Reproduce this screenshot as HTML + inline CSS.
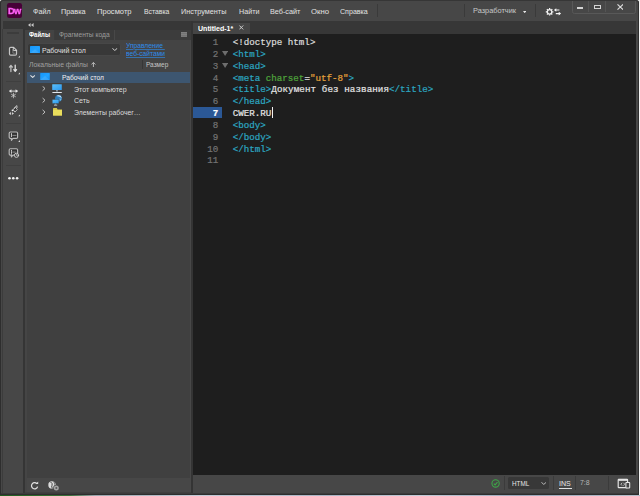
<!DOCTYPE html>
<html lang="ru">
<head>
<meta charset="utf-8">
<title>Dreamweaver - Untitled-1</title>
<style>
html,body{margin:0;padding:0;}
body{width:640px;height:496px;overflow:hidden;position:relative;background:#f4f4f4;font-family:"Liberation Sans",sans-serif;}
.abs,.t,#win div,#win svg{position:absolute;}
.t{white-space:pre;line-height:12px;height:12px;transform-origin:0 50%;}
#wall{left:0;top:495px;width:640px;height:1px;background:linear-gradient(90deg,#1f5a1f 0,#2e6b2c 40px,#3a6e3a 70px,#9aa5ad 95px,#c4ccd8 200px,#aab4c4 330px,#c4ccd8 420px,#9ca8bc 520px,#b8c0cc 640px);}
#win{left:0;top:0;width:639px;height:495px;background:#474747;border-radius:3px 3px 0 0;overflow:hidden;}
#frame{left:0;top:0;width:637px;height:493px;border:1px solid #2e2e2e;border-top-color:#363636;border-radius:3px 3px 0 0;z-index:50;pointer-events:none;}
#menubar{left:0;top:0;width:640px;height:21px;background:#474747;}
#strip{left:3px;top:21px;width:633px;height:13px;background:#373737;}
#tool{left:3px;top:29px;width:20px;height:464px;background:#474747;box-shadow:-0.8px 0 0 #3a3a3a;}
#gap1{left:23px;top:29px;width:2px;height:464px;background:#353535;}
#panel{left:25px;top:29.5px;width:166.2px;height:463px;background:#404040;}
#ptabs{left:0;top:0;width:166.2px;height:10.2px;background:#3c3c3c;}
#ptab1{left:0;top:0;width:29.2px;height:10.2px;background:#434343;}
#ptab2{left:29.5px;top:0;width:60px;height:10.2px;background:#3b3b3b;}
#pbot{left:0;top:448.5px;width:166.5px;height:13.5px;background:#474747;}
#gap2{left:191.2px;top:21px;width:2px;height:473px;background:#343434;}
#doc{left:193px;top:21px;width:445px;height:473px;}
#dtab{left:0;top:1.8px;width:56.6px;height:11px;background:#454545;}
#code{left:0;top:12.8px;width:443px;height:441px;background:#1e1e1e;}
#status{left:0;top:453.8px;width:445px;height:19.2px;background:#474747;}
.vsep{width:1px;background:#383838;}
.c{position:absolute;white-space:pre;font-family:"Liberation Mono",monospace;font-size:9.2px;line-height:12px;height:12px;-webkit-text-stroke:0.22px;}
</style>
</head>
<body>
<div id="wall" class="abs"></div>
<div id="win" class="abs">
  <div id="menubar"></div>
  <div id="strip"></div>
  <div id="tool"></div>
  <div id="gap1"></div>
  <div id="panel">
    <div id="ptabs"><div id="ptab1"></div><div id="ptab2"></div></div>
    <div id="pbot"></div>
  </div>
  <div id="gap2"></div>
  <div id="doc">
    <div id="dtab"></div>
    <div id="code"></div>
    <div id="status"></div>
  </div>
  <!-- Dw logo -->
<div id="logo" style="left:7.2px;top:3.2px;width:14.8px;height:15.2px;background:#470137;border-radius:2.2px;"></div>
<span class="t" id="logot" style="left:7.9px;top:5.0px;color:#ff61f6;font-size:9.3px;font-weight:700;letter-spacing:-0.6px;-webkit-text-stroke:0.35px #ff61f6;will-change:transform;">Dw</span>
<!-- collapse arrows -->
<svg style="left:27.8px;top:23.2px" width="6" height="4" viewBox="0 0 6 4"><path d="M2.6 0V4L0 2ZM5.6 0V4L3 2Z" fill="#c4c4c4"/></svg>
<!-- toolbar grip -->
<div style="left:7px;top:32px;width:12.4px;height:1.6px;background:#3c3c3c;"></div>
<!-- toolbar separators -->
<div style="left:6px;top:80.8px;width:15px;height:1px;background:#3f3f3f;"></div>
<div style="left:6px;top:122.8px;width:15px;height:1px;background:#3f3f3f;"></div>
<div style="left:6px;top:164.8px;width:15px;height:1px;background:#3f3f3f;"></div>
<!-- toolbar icons -->
<svg id="tbicons" style="left:3px;top:40px" width="20" height="150" viewBox="3 40 20 150" fill="none" stroke="#c4c4c4" stroke-width="1.1" stroke-linecap="round" stroke-linejoin="round">
  <!-- file -->
  <path d="M10.7 47.4H13.6L16.5 50.2V54Q16.5 55.2 15.3 55.2H10.7Q9.5 55.2 9.5 54V48.6Q9.5 47.4 10.7 47.4Z" fill="#363636" stroke-width="1.25"/>
  <path d="M13.3 47.8V50.6H16.2" stroke-width="0.9" stroke="#e0e0e0"/>
  <path d="M12.9 49.4V53.2H15.2" stroke-width="0.8" stroke="#8a8a8a"/>
  <path d="M20 55.7V57.5H18.2Z" fill="#d8d8d8" stroke="none"/>
  <!-- up/down arrows -->
  <path d="M10.9 71.6V66M9.4 67.1L10.9 65.3L12.4 67.1" stroke-width="1.25" stroke="#c0c0c0"/>
  <path d="M15.2 65V70.6M13.8 69.7L15.2 71.4L16.6 69.7" stroke-width="1.25" stroke="#e4e4e4"/>
  <path d="M20 72.4V74.2H18.2Z" fill="#d8d8d8" stroke="none"/>
  <!-- expand -->
  <path d="M10.6 91.1H16.4" stroke-width="1" stroke="#d0d0d0"/>
  <path d="M11 90L9.2 91.1L11 92.2ZM16 90L17.8 91.1L16 92.2Z" fill="#f0f0f0" stroke="#f0f0f0" stroke-width="0.5"/>
  <path d="M13.45 93.2V97.8M11.5 94.35L15.4 96.65M15.4 94.35L11.5 96.65" stroke-width="0.8" stroke="#cccccc"/>
  <!-- brush / code -->
  <path d="M11 112L8.9 113.45L11 114.9ZM11.9 112L14 113.45L11.9 114.9Z" fill="#cfcfcf" stroke="none"/>
  <path d="M13.4 109.4L15.6 107.4L17.3 109.4L15.2 111.8Z" stroke-width="1" stroke="#bdbdbd" fill="#333"/>
  <path d="M14 108.2L16.9 105.6L17 107.6" stroke-width="1" stroke="#c8c8c8"/>
  <circle cx="12.5" cy="110.3" r="0.9" fill="#efefef" stroke="none"/>
  <path d="M20 114.4V116.2H18.2Z" fill="#d8d8d8" stroke="none"/>
  <!-- comment 1 -->
  <path d="M10.4 132H16.4Q17.6 132 17.6 133.2V137.2Q17.6 138.4 16.4 138.4H12.9L11.4 140.3V138.4H10.4Q9.2 138.4 9.2 137.2V133.2Q9.2 132 10.4 132Z" stroke-width="1.15" fill="#333" stroke="#bababa"/>
  <path d="M11.45 133.6V137.4" stroke-width="0.9" stroke="#e4e4e4" stroke-dasharray="1.1 0.8"/>
  <path d="M12.8 135.4H16" stroke-width="0.9" stroke="#9a9a9a"/>
  <path d="M20 140.1V141.9H18.2Z" fill="#d8d8d8" stroke="none"/>
  <!-- comment 2 -->
  <path d="M10.4 148.7H16.4Q17.6 148.7 17.6 149.9V153.9Q17.6 155.1 16.4 155.1H12.9L11.4 157V155.1H10.4Q9.2 155.1 9.2 153.9V149.9Q9.2 148.7 10.4 148.7Z" stroke-width="1.15" fill="#333" stroke="#bababa"/>
  <path d="M11.45 150.3V154.1" stroke-width="0.9" stroke="#e4e4e4" stroke-dasharray="1.1 0.8"/>
  <path d="M12.8 152.1H15.4" stroke-width="0.9" stroke="#9a9a9a"/>
  <circle cx="16.5" cy="155.3" r="2.1" stroke-width="0.9" fill="#444" stroke="#d4d4d4"/>
  <path d="M16.5 154.2V155.4H17.4" stroke-width="0.6" stroke="#d4d4d4"/>
  <!-- dots -->
  <circle cx="9.5" cy="178.3" r="1.3" fill="#f2f2f2" stroke="none"/>
  <circle cx="13.3" cy="178.3" r="1.3" fill="#f2f2f2" stroke="none"/>
  <circle cx="17.1" cy="178.3" r="1.3" fill="#f2f2f2" stroke="none"/>
</svg>
<!-- panel: tabs separators, hamburger -->
<div style="left:114.2px;top:30px;width:0.8px;height:9.6px;background:#484848;"></div>
<svg style="left:181px;top:32.2px" width="6.2" height="4.8" viewBox="0 0 6.2 4.8"><path d="M0 0H6.2V1.2H0ZM0 1.8H6.2V3H0ZM0 3.6H6.2V4.8H0Z" fill="#8a8a8a"/><rect width="6.2" height="4.8" fill="#7c7c7c" opacity="0.7"/></svg>
<div style="left:25px;top:39.7px;width:166.2px;height:32.1px;background:#444444;"></div>
<!-- site dropdown -->
<div style="left:28.4px;top:43.8px;width:91.4px;height:11.3px;background:#383838;border-radius:1.6px;box-shadow:0 0 0 0.5px #4a4a4a;"></div>
<svg style="left:29.8px;top:45.6px" width="10" height="7.4" viewBox="0 0 10 7.4"><defs><linearGradient id="dg" x1="0" y1="0" x2="1" y2="1"><stop offset="0" stop-color="#1496fb"/><stop offset="0.55" stop-color="#22a2ff"/><stop offset="1" stop-color="#1290f4"/></linearGradient></defs><rect width="10" height="7.4" rx="0.6" fill="url(#dg)"/><path d="M0 7.4L5 3.2L10 7.4Z" fill="#54b2fa" opacity="0.45"/></svg>
<svg style="left:112.1px;top:48.1px" width="5.6" height="3" viewBox="0 0 5.6 3" fill="none" stroke="#d0d0d0" stroke-width="1"><path d="M0.4 0.3L2.8 2.5L5.2 0.3"/></svg>
<!-- header: sort arrow, column separator -->
<svg style="left:91.2px;top:61.8px" width="4.8" height="5.2" viewBox="0 0 4.8 5.2" fill="none" stroke="#c8c8c8" stroke-width="0.9"><path d="M2.4 5.2V0.6M0.4 2.5L2.4 0.5L4.4 2.5"/></svg>
<div style="left:141.6px;top:59.9px;width:0.9px;height:9.4px;background:#363636;"></div>
<!-- tree -->
<div style="left:27px;top:71.8px;width:162.9px;height:10.9px;background:#3d5670;"></div>
<svg style="left:29.7px;top:75.3px" width="5.4" height="3" viewBox="0 0 5.4 3" fill="none" stroke="#e2e2e2" stroke-width="1.05"><path d="M0.4 0.4L2.7 2.4L5 0.4"/></svg>
<svg style="left:39.9px;top:72.8px" width="10" height="7.1" viewBox="0 0 10 7.4"><rect width="10" height="7.4" rx="0.6" fill="url(#dg)"/><path d="M0 7.4L5 3.2L10 7.4Z" fill="#54b2fa" opacity="0.45"/></svg>
<svg id="chev" style="left:41.6px;top:86.2px" width="4" height="30" viewBox="0 0 4 30" fill="none" stroke="#c4c4c4" stroke-width="1"><path d="M0.6 0.3L3 2.5L0.6 4.7M0.6 12.1L3 14.3L0.6 16.5M0.6 23.9L3 26.1L0.6 28.3"/></svg>
<!-- this computer -->
<svg style="left:52.4px;top:84px" width="10.2" height="9.4" viewBox="0 0 10.2 9.4"><defs><linearGradient id="mg" x1="0" y1="0" x2="1" y2="1"><stop offset="0" stop-color="#5cc0fb"/><stop offset="1" stop-color="#2a98ee"/></linearGradient></defs><rect x="0.2" y="0.2" width="9.6" height="5.9" rx="0.4" fill="url(#mg)"/><rect x="4.4" y="6.1" width="1.2" height="1.9" fill="#6f8598"/><rect x="4.5" y="6.3" width="0.9" height="0.8" fill="#e8eef2"/><rect x="0.4" y="8" width="9.4" height="1" fill="#e4e9ee"/></svg>
<!-- network -->
<svg style="left:52.4px;top:94px" width="10.6" height="12" viewBox="0 0 10.6 12"><circle cx="6.5" cy="4.3" r="3.4" fill="#2f7fbd"/><path d="M4.6 2Q6.4 0.5 8.4 1.7Q9.7 3 9.6 4.6Q8.6 3 7.2 2.6Q5.6 2.4 4.6 2Z" fill="#d6ecfa"/><path d="M7.6 4.2Q9.2 4.2 9.4 5.8Q8.6 7 7.8 6.8Z" fill="#6fb6e6"/><rect x="0.3" y="5.4" width="6.6" height="4.1" rx="0.3" fill="url(#mg)" stroke="#3a3a3a" stroke-width="0.35"/><rect x="3.1" y="9.6" width="1" height="1.1" fill="#7d93a6"/><rect x="2" y="10.7" width="3.2" height="0.8" fill="#d8e0e6"/></svg>
<!-- folder -->
<svg style="left:52.8px;top:108.3px" width="9.2" height="7.6" viewBox="0 0 9.2 7.6"><path d="M0 0.6Q0 0 0.6 0H3.8L4.6 1.4H8.6Q9.2 1.4 9.2 2V7Q9.2 7.6 8.6 7.6H0.6Q0 7.6 0 7Z" fill="#d9ca4c"/><rect x="0" y="1.9" width="9.2" height="5.7" rx="0.5" fill="#eade5c"/></svg>
<!-- panel bottom icons -->
<svg style="left:30px;top:481px" width="10" height="10" viewBox="30 481 10 10" fill="none" stroke="#e0e0e0" stroke-width="1.25"><path d="M37 483.8A3.1 3.1 0 1 0 37.6 486.6"/><path d="M35.6 483.9H38.2V481.6Z" fill="#e0e0e0" stroke="none"/></svg>
<svg style="left:47px;top:480px" width="14" height="12" viewBox="47 480 14 12"><circle cx="52" cy="484.9" r="3.7" fill="#dcdcdc"/><path d="M50.6 482Q53 483.6 52 485.4Q51 487 52.6 488.4" fill="none" stroke="#444" stroke-width="1"/><path d="M53.4 481.6Q55.4 483 54.6 484.6" fill="none" stroke="#444" stroke-width="0.8"/><circle cx="56.3" cy="487.9" r="3.1" fill="#464646"/><circle cx="56.3" cy="487.9" r="2.5" fill="#a4a4a4"/><circle cx="56.3" cy="487.9" r="1" fill="#5a5a5a"/></svg>
<!-- menubar separators -->
<div style="left:377px;top:4.4px;width:1px;height:12.6px;background:#3a3a3a;"></div>
<div style="left:464.2px;top:4.4px;width:1px;height:12.6px;background:#3a3a3a;"></div>
<div style="left:535px;top:4.4px;width:1px;height:12.6px;background:#3a3a3a;"></div>
<!-- workspace triangle -->
<svg style="left:523px;top:10.6px" width="3.4" height="2.2" viewBox="0 0 3.4 2.2"><path d="M0 0H3.4L1.7 2.2Z" fill="#e8e8e8"/></svg>
<!-- gear + sync arrows -->
<svg style="left:545px;top:6.5px" width="17" height="10" viewBox="545 6.5 17 10">
  <g fill="none" stroke="#f2f2f2">
    <circle cx="549.6" cy="11.3" r="2.25" stroke-width="1.3"/>
    <path d="M549.6 7.5V8.7M549.6 13.9V15.1M545.8 11.3H547M552.2 11.3H553.4M546.9 8.6L547.8 9.5M551.4 13.1L552.3 14M552.3 8.6L551.4 9.5M547.8 13.1L546.9 14" stroke-width="1.25"/>
    <path d="M555.6 9.5H559.4M555.8 13.1H559.8" stroke-width="1.1"/>
  </g>
  <path d="M553.9 9.5L556.3 7.7V11.3ZM561.1 13.1L558.7 11.3V14.9Z" fill="#f2f2f2"/>
</svg>
<!-- window controls -->
<div style="left:571.6px;top:-2px;width:62.4px;height:13.8px;border:0.8px solid #585858;border-radius:0 0 2.4px 2.4px;"></div>
<div style="left:588.4px;top:0;width:0.8px;height:12px;background:#545454;"></div>
<div style="left:605.4px;top:0;width:0.8px;height:12px;background:#545454;"></div>
<div style="left:576.6px;top:7.4px;width:6.2px;height:1.9px;background:#d4d4d4;"></div>
<div style="left:594.2px;top:4.5px;width:4.4px;height:2.9px;border:0.9px solid #d4d4d4;border-top-width:1.6px;"></div>
<svg style="left:616.6px;top:3.6px" width="6.6" height="6" viewBox="0 0 6.6 6" fill="none" stroke="#dedede" stroke-width="1.15"><path d="M0.5 0.4L6.1 5.6M6.1 0.4L0.5 5.6"/></svg>
<!-- status bar -->
<svg style="left:490.5px;top:479px" width="9.4" height="9" viewBox="490.5 479 9.4 9" fill="none" stroke="#3ea648"><circle cx="495.1" cy="483.45" r="3.65" stroke-width="1.1"/><path d="M493.3 483.6L494.6 484.9L497 482.1" stroke-width="1.1"/></svg>
<div style="left:503.6px;top:476.4px;width:0.8px;height:14px;background:#3b3b3b;"></div>
<div style="left:507.8px;top:477.4px;width:41.2px;height:11.9px;background:#383838;border-radius:1.6px;"></div>
<svg style="left:540.8px;top:481.8px" width="5.6" height="2.9" viewBox="0 0 5.6 2.9" fill="none" stroke="#c6c6c6" stroke-width="0.9"><path d="M0.4 0.3L2.8 2.4L5.2 0.3"/></svg>
<div style="left:553px;top:476.4px;width:0.8px;height:14px;background:#3b3b3b;"></div>
<div style="left:558.6px;top:487.5px;width:13px;height:1.1px;background:#e0e0e0;"></div>
<div style="left:575.4px;top:476.4px;width:0.8px;height:14px;background:#3b3b3b;"></div>
<div style="left:607.6px;top:476.4px;width:0.8px;height:14px;background:#3b3b3b;"></div>
<svg style="left:616.5px;top:478.4px" width="14" height="11" viewBox="616.5 478.4 14 11" fill="none" stroke="#e6e6e6">
  <rect x="617.7" y="479.8" width="9.4" height="8.2" rx="0.6" stroke-width="1.15"/>
  <path d="M617.7 480.3H627.1" stroke-width="1.9"/>
  <rect x="625.4" y="482.8" width="3.8" height="5.6" rx="0.5" fill="#444" stroke-width="1.05"/>
  <path d="M621.6 483.2L620.4 484.6L621.6 486M623 483.2L624.2 484.6L623 486" stroke-width="0.7"/>
</svg>
<!-- doc tab close -->
<svg style="left:239.2px;top:25.4px" width="4.6" height="4.8" viewBox="0 0 4.6 4.8" fill="none" stroke="#cdcdcd" stroke-width="1"><path d="M0.4 0.5L4.2 4.4M4.2 0.5L0.4 4.4"/></svg>
<div style="left:1px;top:493px;width:637px;height:1px;background:#3b3b3b;"></div>
<div style="left:189.9px;top:39.7px;width:1.3px;height:452.8px;background:#484848;"></div>
<div style="left:25px;top:39.7px;width:2px;height:452.8px;background:#454545;"></div>

  <span class="t" style="left:33.00px;top:5.55px;color:#e2e2e2;font-size:7.40px;font-weight:400;font-family:'Liberation Sans', sans-serif;transform:scaleX(0.9685);">Файл</span>
<span class="t" style="left:61.40px;top:5.55px;color:#e2e2e2;font-size:7.40px;font-weight:400;font-family:'Liberation Sans', sans-serif;transform:scaleX(0.9852);">Правка</span>
<span class="t" style="left:97.40px;top:5.55px;color:#e2e2e2;font-size:7.40px;font-weight:400;font-family:'Liberation Sans', sans-serif;transform:scaleX(1.0247);">Просмотр</span>
<span class="t" style="left:143.60px;top:5.55px;color:#e2e2e2;font-size:7.40px;font-weight:400;font-family:'Liberation Sans', sans-serif;transform:scaleX(0.9242);">Вставка</span>
<span class="t" style="left:181.00px;top:5.55px;color:#e2e2e2;font-size:7.40px;font-weight:400;font-family:'Liberation Sans', sans-serif;transform:scaleX(0.9849);">Инструменты</span>
<span class="t" style="left:238.60px;top:5.55px;color:#e2e2e2;font-size:7.40px;font-weight:400;font-family:'Liberation Sans', sans-serif;transform:scaleX(0.9671);">Найти</span>
<span class="t" style="left:270.00px;top:5.55px;color:#e2e2e2;font-size:7.40px;font-weight:400;font-family:'Liberation Sans', sans-serif;transform:scaleX(0.9811);">Веб-сайт</span>
<span class="t" style="left:311.00px;top:5.55px;color:#e2e2e2;font-size:7.40px;font-weight:400;font-family:'Liberation Sans', sans-serif;transform:scaleX(1.0473);">Окно</span>
<span class="t" style="left:339.60px;top:5.55px;color:#e2e2e2;font-size:7.40px;font-weight:400;font-family:'Liberation Sans', sans-serif;transform:scaleX(0.9586);">Справка</span>
<span class="t" style="left:473.10px;top:4.55px;color:#c8c8c8;font-size:7.40px;font-weight:400;font-family:'Liberation Sans', sans-serif;transform:scaleX(0.9975);">Разработчик</span>
<span class="t" style="left:29.20px;top:28.55px;color:#ffffff;font-size:7.40px;font-weight:700;font-family:'Liberation Sans', sans-serif;transform:scaleX(0.8087);">Файлы</span>
<span class="t" style="left:58.50px;top:28.55px;color:#9c9c9c;font-size:7.20px;font-weight:400;font-family:'Liberation Sans', sans-serif;transform:scaleX(0.9250);">Фрагменты кода</span>
<span class="t" style="left:41.80px;top:44.55px;color:#e0e0e0;font-size:7.40px;font-weight:400;font-family:'Liberation Sans', sans-serif;transform:scaleX(0.9417);">Рабочий стол</span>
<span class="t" style="left:125.70px;top:39.55px;color:#2d8ceb;font-size:7.40px;font-weight:400;font-family:'Liberation Sans', sans-serif;transform:scaleX(0.8994);text-decoration:underline;text-decoration-thickness:0.7px;text-underline-offset:0.8px;text-decoration-color:rgba(45,140,235,0.62);">Управление </span>
<span class="t" style="left:125.70px;top:47.55px;color:#2d8ceb;font-size:7.40px;font-weight:400;font-family:'Liberation Sans', sans-serif;transform:scaleX(0.9067);text-decoration:underline;text-decoration-thickness:0.7px;text-underline-offset:0.8px;text-decoration-color:rgba(45,140,235,0.62);">веб-сайтами</span>
<span class="t" style="left:29.40px;top:58.55px;color:#a0a0a0;font-size:7.40px;font-weight:400;font-family:'Liberation Sans', sans-serif;transform:scaleX(0.9167);">Локальные файлы</span>
<span class="t" style="left:145.80px;top:58.55px;color:#c4c4c4;font-size:7.40px;font-weight:400;font-family:'Liberation Sans', sans-serif;transform:scaleX(0.8777);">Размер</span>
<span class="t" style="left:62.00px;top:71.55px;color:#f0f0f0;font-size:7.40px;font-weight:400;font-family:'Liberation Sans', sans-serif;transform:scaleX(0.9051);">Рабочий стол</span>
<span class="t" style="left:74.40px;top:83.55px;color:#dcdcdc;font-size:7.40px;font-weight:400;font-family:'Liberation Sans', sans-serif;transform:scaleX(0.9518);">Этот компьютер</span>
<span class="t" style="left:74.40px;top:94.55px;color:#dcdcdc;font-size:7.40px;font-weight:400;font-family:'Liberation Sans', sans-serif;transform:scaleX(0.9490);">Сеть</span>
<span class="t" style="left:74.40px;top:106.55px;color:#dcdcdc;font-size:7.40px;font-weight:400;font-family:'Liberation Sans', sans-serif;transform:scaleX(0.9254);">Элементы рабочег…</span>
<span class="t" style="left:198.40px;top:22.55px;color:#ffffff;font-size:7.40px;font-weight:700;font-family:'Liberation Sans', sans-serif;transform:scaleX(0.9522);">Untitled-1*</span>
<span class="t" style="left:511.75px;top:477.55px;color:#e6e6e6;font-size:7.40px;font-weight:400;font-family:'Liberation Sans', sans-serif;transform:scaleX(0.8571);">HTML</span>
<span class="t" style="left:559.20px;top:477.55px;color:#e6e6e6;font-size:7.40px;font-weight:400;font-family:'Liberation Sans', sans-serif;transform:scaleX(0.9572);">INS</span>
<span class="t" style="left:579.75px;top:476.55px;color:#b6b6b6;font-size:7.40px;font-weight:400;font-family:'Liberation Sans', sans-serif;transform:scaleX(0.9386);">7:8</span>
  <span class="c" style="left:207.30px;top:36.55px;width:11.00px;text-align:right;color:#737373;">1</span>
<span class="c" style="left:232.7px;top:36.55px"><span style="color:#dadada">&lt;!doctype html&gt;</span></span>
<span class="c" style="left:207.30px;top:48.55px;width:11.00px;text-align:right;color:#737373;">2</span>
<span class="c" style="left:232.7px;top:48.55px"><span style="color:#2ca6c0">&lt;html&gt;</span></span>
<span class="c" style="left:207.30px;top:60.55px;width:11.00px;text-align:right;color:#737373;">3</span>
<span class="c" style="left:232.7px;top:60.55px"><span style="color:#2ca6c0">&lt;head&gt;</span></span>
<span class="c" style="left:207.30px;top:72.55px;width:11.00px;text-align:right;color:#737373;">4</span>
<span class="c" style="left:232.7px;top:72.55px"><span style="color:#2ca6c0">&lt;meta </span><span style="color:#4fa53c">charset</span><span style="color:#e2e2e2">=</span><span style="color:#e5a23c">&quot;utf-8&quot;</span><span style="color:#2ca6c0">&gt;</span></span>
<span class="c" style="left:207.30px;top:83.55px;width:11.00px;text-align:right;color:#737373;">5</span>
<span class="c" style="left:232.7px;top:83.55px"><span style="color:#2ca6c0">&lt;title&gt;</span><span style="color:#e2e2e2;letter-spacing:0.095px">Документ без названия</span><span style="color:#2ca6c0">&lt;/title&gt;</span></span>
<span class="c" style="left:207.30px;top:95.55px;width:11.00px;text-align:right;color:#737373;">6</span>
<span class="c" style="left:232.7px;top:95.55px"><span style="color:#2ca6c0">&lt;/head&gt;</span></span>
<div class="abs" style="left:193px;top:107.00px;width:28.6px;height:11px;background:#2b5896"></div>
<span class="c" style="left:207.30px;top:107.55px;width:11.00px;text-align:right;color:#ffffff;font-weight:700;">7</span>
<span class="c" style="left:232.7px;top:107.55px"><span style="color:#e2e2e2">CWER.RU</span></span>
<span class="c" style="left:207.30px;top:119.55px;width:11.00px;text-align:right;color:#737373;">8</span>
<span class="c" style="left:232.7px;top:119.55px"><span style="color:#2ca6c0">&lt;body&gt;</span></span>
<span class="c" style="left:207.30px;top:131.55px;width:11.00px;text-align:right;color:#737373;">9</span>
<span class="c" style="left:232.7px;top:131.55px"><span style="color:#2ca6c0">&lt;/body&gt;</span></span>
<span class="c" style="left:207.30px;top:143.55px;width:11.00px;text-align:right;color:#737373;">10</span>
<span class="c" style="left:232.7px;top:143.55px"><span style="color:#2ca6c0">&lt;/html&gt;</span></span>
<span class="c" style="left:207.30px;top:154.55px;width:11.00px;text-align:right;color:#737373;">11</span>
<svg style="left:221.5px;top:51.20px" width="6.2" height="5" viewBox="0 0 6.2 5"><path d="M0 0H6.2L3.1 5Z" fill="#6e6e6e"/></svg>
<svg style="left:221.5px;top:63.00px" width="6.2" height="5" viewBox="0 0 6.2 5"><path d="M0 0H6.2L3.1 5Z" fill="#6e6e6e"/></svg>
<div class="abs" style="left:272px;top:106.80px;width:1px;height:11.6px;background:#f0f0f0"></div>
  <div id="frame"></div>
</div>
</body>
</html>
